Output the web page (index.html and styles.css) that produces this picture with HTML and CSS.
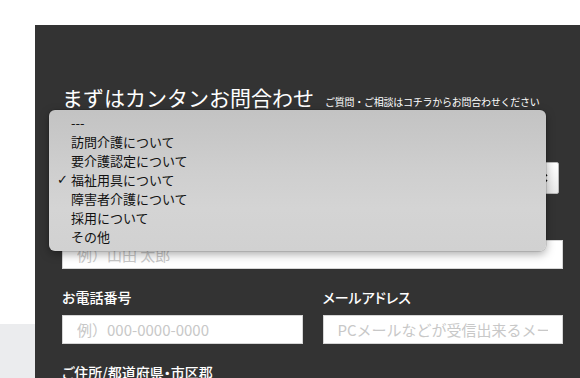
FILE: index.html
```html
<!DOCTYPE html>
<html lang="ja">
<head>
<meta charset="utf-8">
<link rel="stylesheet" href="styles.css">
</head>
<body>
<div class="page">
  <div class="side"><div class="side-fill"></div></div>
  <main class="panel">
    <div class="heading">
      <h1 class="title">まずはカンタンお問合わせ</h1>
      <p class="subtitle">ご質問・ご相談はコチラからお問合わせください</p>
    </div>

    <div class="field first">
      <label class="label">お問合わせ内容</label>
      <div class="select">
        <span class="select-value">福祉用具について</span>
        <svg class="select-arrows" width="8" height="14" viewBox="0 0 8 14"><path d="M1 5 L4 2 L7 5 M1 9 L4 12 L7 9" fill="none" stroke="#111" stroke-width="1.6"/></svg>
      </div>
    </div>

    <div class="field">
      <label class="label">お名前</label>
      <input class="input" type="text" placeholder="例）山田 太郎">
    </div>

    <div class="row">
      <div class="field">
        <label class="label">お電話番号</label>
        <input class="input" type="text" placeholder="例）000-0000-0000">
      </div>
      <div class="field">
        <label class="label">メールアドレス</label>
        <input class="input" type="text" placeholder="PCメールなどが受信出来るメールアドレス">
      </div>
    </div>

    <div class="field">
      <label class="label">ご住所/都道府県・市区郡</label>
      <input class="input" type="text">
    </div>

    <ul class="popup">
      <li class="opt">---</li>
      <li class="opt">訪問介護について</li>
      <li class="opt">要介護認定について</li>
      <li class="opt checked">福祉用具について</li>
      <li class="opt">障害者介護について</li>
      <li class="opt">採用について</li>
      <li class="opt">その他</li>
    </ul>
  </main>
</div>
</body>
</html>
```

FILE: styles.css
```css
* { box-sizing: border-box; }
html, body { margin: 0; padding: 0; background: #ffffff; }
body {
  font-family: "Noto Sans CJK JP", "Noto Sans", sans-serif;
  height: 378px;
  overflow: hidden;
}
.page {
  display: flex;
  height: 378px;
}
.side {
  width: 35px;
  flex: none;
  padding-top: 324px;
  display: flex;
  flex-direction: column;
}
.side-fill {
  flex: 1;
  background: #ebecee;
}
.panel {
  position: relative;
  flex: 1;
  margin-top: 25px;
  background: #333333;
  padding: 57px 17px 0 27px;
  color: #ffffff;
}
.heading {
  display: flex;
  align-items: baseline;
  gap: 11px;
  height: 30px;
}
.title {
  margin: 0;
  font-size: 21px;
  line-height: 30px;
  font-weight: normal;
  white-space: nowrap;
}
.subtitle {
  margin: 0;
  font-size: 10px;
  line-height: 14px;
  letter-spacing: -0.25px;
  white-space: nowrap;
}
.field {
  display: flex;
  flex-direction: column;
  margin-top: 18px;
}
.field.first { margin-top: 22px; }
.label {
  font-size: 14px;
  line-height: 20px;
  font-weight: 500;
  font-feature-settings: "palt";
  margin-bottom: 8px;
  white-space: nowrap;
}
.select {
  position: relative;
  height: 32px;
  width: calc(100% - 4px);
  border: 1px solid #b9b9b9;
  border-radius: 2px;
  background: linear-gradient(180deg, #ffffff, #e9e9e9);
  color: #111;
  font-size: 13px;
  display: flex;
  align-items: center;
  padding-left: 14px;
}
.select-arrows {
  position: absolute;
  right: 10px;
  top: 8px;
}
.input {
  display: block;
  width: 100%;
  height: 29px;
  border: 1px solid #d6d6d6;
  background: #ffffff;
  padding: 0 14px;
  font-family: "Noto Sans CJK JP", "Noto Sans", sans-serif;
  font-size: 15px;
  color: #333;
  outline: none;
  margin: 0;
}
.input::placeholder { color: #c8c8c8; }
.row {
  display: grid;
  grid-template-columns: 1fr 1fr;
  column-gap: 20px;
}
.popup {
  position: absolute;
  left: 14px;
  top: 85px;
  width: 497px;
  margin: 0;
  padding: 3px 0 5px;
  list-style: none;
  border-radius: 6px;
  background: linear-gradient(180deg, #c3c3c3 0%, #cfcfcf 45%, #d4d4d4 70%, #d1d1d1 100%);
  box-shadow: 0 3px 10px rgba(0, 0, 0, 0.35), 0 0 0 0.5px rgba(0, 0, 0, 0.2);
  color: #111111;
}
.opt {
  position: relative;
  height: 19px;
  line-height: 19px;
  font-size: 13px;
  padding-left: 22px;
  white-space: nowrap;
}
.opt.checked::before {
  content: "✓";
  position: absolute;
  left: 8px;
  top: 0;
  font-family: "DejaVu Sans", sans-serif;
  font-size: 13px;
  font-weight: bold;
}
```
